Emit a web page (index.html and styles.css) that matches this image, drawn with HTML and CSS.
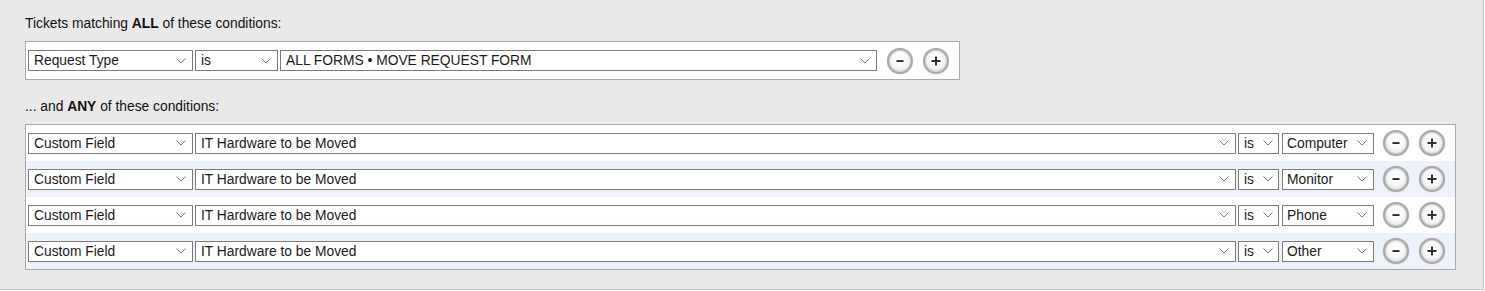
FILE: index.html
```html
<!DOCTYPE html>
<html>
<head>
<meta charset="utf-8">
<link rel="stylesheet" href="styles.css">
</head>
<body>
<div class="panel">
  <div class="label">Tickets matching <b>ALL</b> of these conditions:</div>
  <div class="box box-all">
    <div class="row">
      <div class="sel w-field"><span>Request Type</span><svg class="chev" viewBox="0 0 10 6"><path d="M0.5 0.5 L5 5 L9.5 0.5"/></svg></div>
      <div class="sel w-op"><span>is</span><svg class="chev" viewBox="0 0 10 6"><path d="M0.5 0.5 L5 5 L9.5 0.5"/></svg></div>
      <div class="sel w-form"><span>ALL FORMS • MOVE REQUEST FORM</span><svg class="chev" viewBox="0 0 10 6"><path d="M0.5 0.5 L5 5 L9.5 0.5"/></svg></div>
      <div class="btns">
        <div class="btn"><svg viewBox="0 0 10 10"><rect x="1.5" y="4.1" width="7" height="1.9"/></svg></div>
        <div class="btn"><svg viewBox="0 0 10 10"><rect x="0.5" y="4.05" width="9" height="1.9"/><rect x="4.05" y="0.5" width="1.9" height="9"/></svg></div>
      </div>
    </div>
  </div>
  <div class="label label-any">... and <b>ANY</b> of these conditions:</div>
  <div class="box box-any">
    <div class="row">
      <div class="sel w-field"><span>Custom Field</span><svg class="chev" viewBox="0 0 10 6"><path d="M0.5 0.5 L5 5 L9.5 0.5"/></svg></div>
      <div class="sel w-cf"><span>IT Hardware to be Moved</span><svg class="chev" viewBox="0 0 10 6"><path d="M0.5 0.5 L5 5 L9.5 0.5"/></svg></div>
      <div class="sel w-is"><span>is</span><svg class="chev" viewBox="0 0 10 6"><path d="M0.5 0.5 L5 5 L9.5 0.5"/></svg></div>
      <div class="sel w-val"><span>Computer</span><svg class="chev" viewBox="0 0 10 6"><path d="M0.5 0.5 L5 5 L9.5 0.5"/></svg></div>
      <div class="btns">
        <div class="btn"><svg viewBox="0 0 10 10"><rect x="1.5" y="4.1" width="7" height="1.9"/></svg></div>
        <div class="btn"><svg viewBox="0 0 10 10"><rect x="0.5" y="4.05" width="9" height="1.9"/><rect x="4.05" y="0.5" width="1.9" height="9"/></svg></div>
      </div>
    </div>
    <div class="row alt">
      <div class="sel w-field"><span>Custom Field</span><svg class="chev" viewBox="0 0 10 6"><path d="M0.5 0.5 L5 5 L9.5 0.5"/></svg></div>
      <div class="sel w-cf"><span>IT Hardware to be Moved</span><svg class="chev" viewBox="0 0 10 6"><path d="M0.5 0.5 L5 5 L9.5 0.5"/></svg></div>
      <div class="sel w-is"><span>is</span><svg class="chev" viewBox="0 0 10 6"><path d="M0.5 0.5 L5 5 L9.5 0.5"/></svg></div>
      <div class="sel w-val"><span>Monitor</span><svg class="chev" viewBox="0 0 10 6"><path d="M0.5 0.5 L5 5 L9.5 0.5"/></svg></div>
      <div class="btns">
        <div class="btn"><svg viewBox="0 0 10 10"><rect x="1.5" y="4.1" width="7" height="1.9"/></svg></div>
        <div class="btn"><svg viewBox="0 0 10 10"><rect x="0.5" y="4.05" width="9" height="1.9"/><rect x="4.05" y="0.5" width="1.9" height="9"/></svg></div>
      </div>
    </div>
    <div class="row">
      <div class="sel w-field"><span>Custom Field</span><svg class="chev" viewBox="0 0 10 6"><path d="M0.5 0.5 L5 5 L9.5 0.5"/></svg></div>
      <div class="sel w-cf"><span>IT Hardware to be Moved</span><svg class="chev" viewBox="0 0 10 6"><path d="M0.5 0.5 L5 5 L9.5 0.5"/></svg></div>
      <div class="sel w-is"><span>is</span><svg class="chev" viewBox="0 0 10 6"><path d="M0.5 0.5 L5 5 L9.5 0.5"/></svg></div>
      <div class="sel w-val"><span>Phone</span><svg class="chev" viewBox="0 0 10 6"><path d="M0.5 0.5 L5 5 L9.5 0.5"/></svg></div>
      <div class="btns">
        <div class="btn"><svg viewBox="0 0 10 10"><rect x="1.5" y="4.1" width="7" height="1.9"/></svg></div>
        <div class="btn"><svg viewBox="0 0 10 10"><rect x="0.5" y="4.05" width="9" height="1.9"/><rect x="4.05" y="0.5" width="1.9" height="9"/></svg></div>
      </div>
    </div>
    <div class="row alt">
      <div class="sel w-field"><span>Custom Field</span><svg class="chev" viewBox="0 0 10 6"><path d="M0.5 0.5 L5 5 L9.5 0.5"/></svg></div>
      <div class="sel w-cf"><span>IT Hardware to be Moved</span><svg class="chev" viewBox="0 0 10 6"><path d="M0.5 0.5 L5 5 L9.5 0.5"/></svg></div>
      <div class="sel w-is"><span>is</span><svg class="chev" viewBox="0 0 10 6"><path d="M0.5 0.5 L5 5 L9.5 0.5"/></svg></div>
      <div class="sel w-val"><span>Other</span><svg class="chev" viewBox="0 0 10 6"><path d="M0.5 0.5 L5 5 L9.5 0.5"/></svg></div>
      <div class="btns">
        <div class="btn"><svg viewBox="0 0 10 10"><rect x="1.5" y="4.1" width="7" height="1.9"/></svg></div>
        <div class="btn"><svg viewBox="0 0 10 10"><rect x="0.5" y="4.05" width="9" height="1.9"/><rect x="4.05" y="0.5" width="1.9" height="9"/></svg></div>
      </div>
    </div>
  </div>
</div>
</body>
</html>
```

FILE: styles.css
```css
html, body {
  margin: 0;
  padding: 0;
  background: #ffffff;
}

.panel {
  box-sizing: border-box;
  width: 1484px;
  height: 290px;
  background: #e9e9e9;
  border-right: 1px solid #c4c4c4;
  border-bottom: 1px solid #c4c4c4;
  padding: 16px 0 0 25px;
  font-family: "Liberation Sans", Arial, sans-serif;
  font-size: 13.8px;
  color: #111;
}

.label {
  line-height: 16px;
  height: 16px;
}

.label-any {
  margin-top: 19px;
}

.box {
  box-sizing: border-box;
  background: #ffffff;
  border: 1px solid #a9a9a9;
  margin-top: 9px;
}

.box-all {
  width: 935px;
}

.box-all .row {
  height: 37px;
}

.box-any {
  width: 1431px;
}

.row {
  display: flex;
  align-items: center;
  gap: 2px;
  height: 36px;
  padding-left: 2px;
}

.row.alt {
  background: #eef3fb;
}

.sel {
  box-sizing: border-box;
  height: 21px;
  border: 1px solid #7b7b7b;
  background: #ffffff;
  display: flex;
  align-items: center;
  justify-content: space-between;
  padding: 0 6px 0 5px;
  color: #1a1a1a;
  line-height: 19px;
  white-space: nowrap;
  flex: none;
}

.chev {
  width: 10px;
  height: 6px;
  flex: none;
}

.chev path {
  fill: none;
  stroke: #7a7a7a;
  stroke-width: 1;
}

.w-field { width: 165px; }
.w-op { width: 83px; }
.w-form { width: 597px; }
.w-cf { width: 1041px; }
.w-is { width: 41px; padding-right: 5px; }
.w-val { width: 92px; margin-left: 1px; padding-left: 4px; }

.btns {
  display: flex;
  gap: 10px;
  margin-left: 7px;
}

.box-all .btns {
  margin-left: 8px;
}

.btn {
  box-sizing: border-box;
  width: 26px;
  height: 26px;
  border-radius: 50%;
  border: 2px solid #a8a8a8;
  background: radial-gradient(circle at 50% 42%, #ffffff 0%, #f8f8f8 45%, #d9d9d9 100%);
  box-shadow: 0 0 1px rgba(0,0,0,0.3), inset 0 0 0 1px #d0d0d0;
  display: flex;
  align-items: center;
  justify-content: center;
}

.btn svg {
  width: 10px;
  height: 10px;
}

.btn svg rect {
  fill: #2a2a2a;
}
```
